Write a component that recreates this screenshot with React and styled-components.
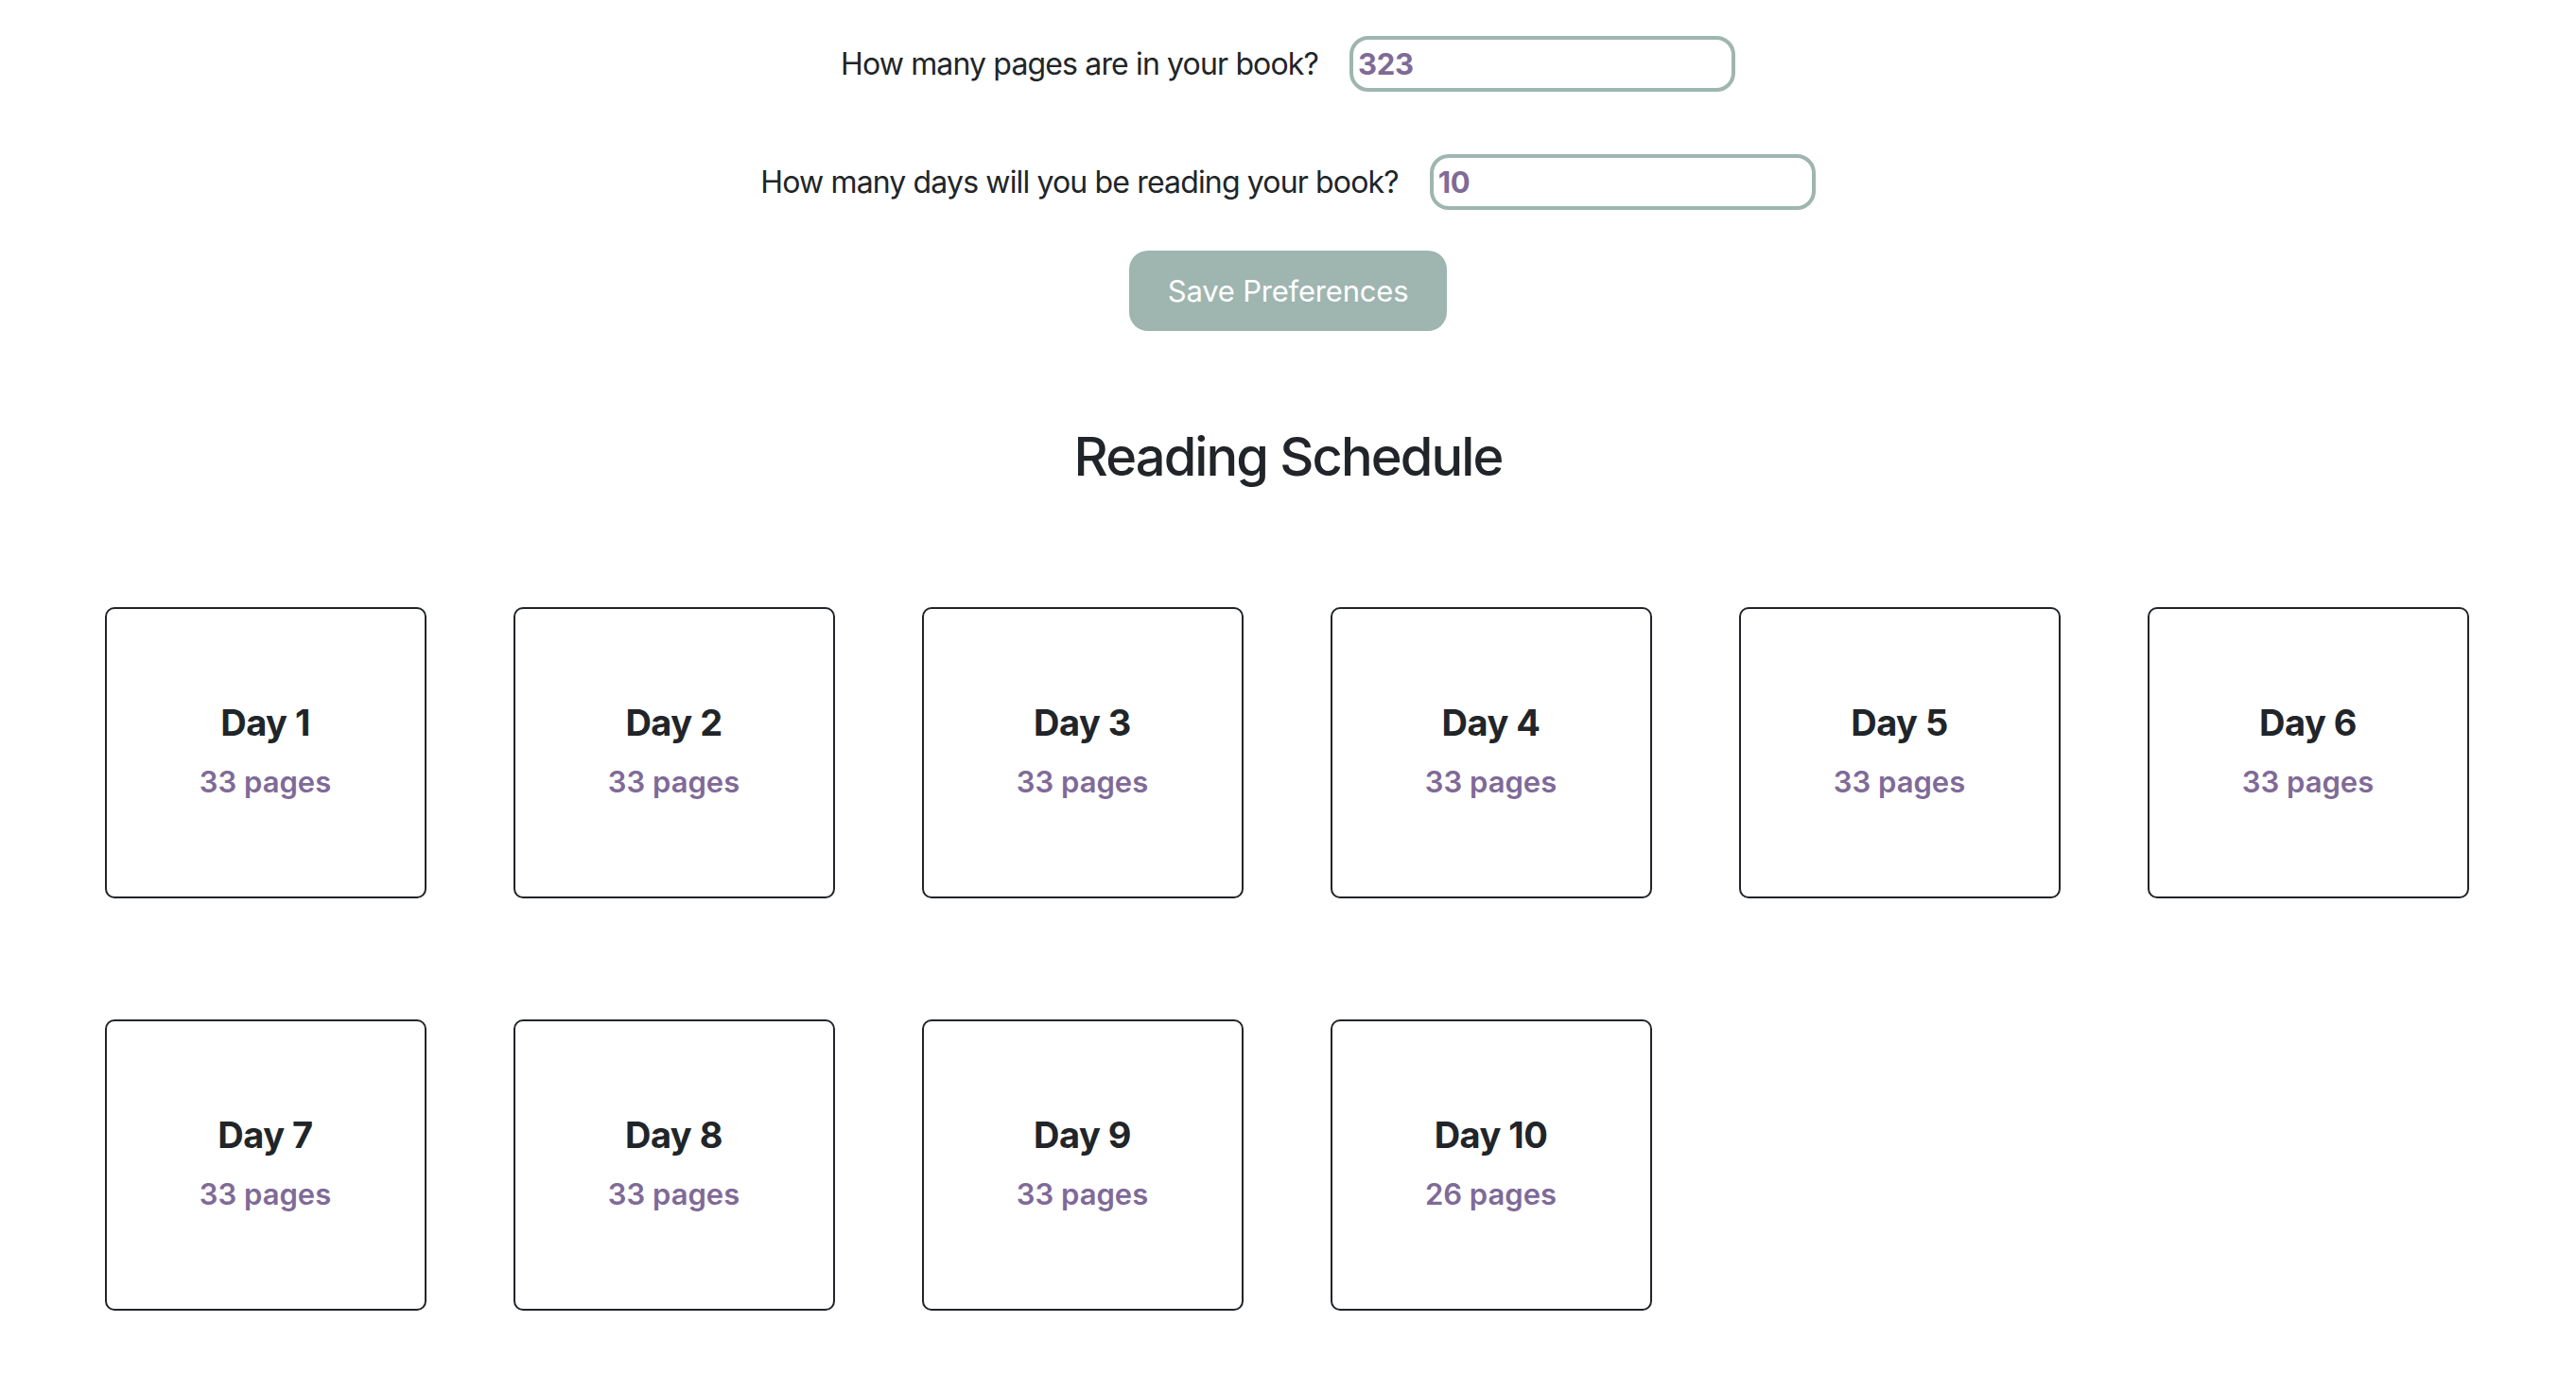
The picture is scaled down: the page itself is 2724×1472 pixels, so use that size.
import React from "react";
import styled, { createGlobalStyle } from "styled-components";

const GlobalStyle = createGlobalStyle`
  html, body {
    margin: 0;
    padding: 0;
    background: #ffffff;
  }
  body {
    font-family: Inter, "Noto Sans", "Liberation Sans", sans-serif;
    color: #212529;
  }
  * { box-sizing: border-box; }
`;

const Page = styled.main`
  width: 100%;
  padding-top: 38px;
  padding-bottom: 80px;
  display: flex;
  flex-direction: column;
  align-items: center;
`;

const Form = styled.form`
  display: flex;
  flex-direction: column;
  align-items: center;
  gap: 66px;
`;

const FieldRow = styled.div`
  display: flex;
  align-items: center;
  gap: 33px;
`;

const Label = styled.label`
  font-size: 32px;
  font-weight: 400;
  letter-spacing: -0.85px;
  color: #212529;
`;

const Input = styled.input`
  width: 408px;
  height: 59px;
  border: 4px solid #9fb5b0;
  border-radius: 20px;
  padding: 0 5px;
  font-family: Inter, "Noto Sans", "Liberation Sans", sans-serif;
  font-size: 31px;
  font-weight: 700;
  letter-spacing: -0.3px;
  color: #7f6a98;
  background: #ffffff;
  outline: none;
`;

const Button = styled.button`
  margin-top: -23px;
  width: 336px;
  height: 85px;
  border: none;
  border-radius: 20px;
  background: #9fb5b0;
  color: #ffffff;
  font-family: Inter, "Noto Sans", "Liberation Sans", sans-serif;
  font-size: 31px;
  font-weight: 400;
  letter-spacing: -0.2px;
  cursor: pointer;
`;

const Heading = styled.h2`
  margin: 100px 0 124px;
  font-size: 56px;
  font-weight: 500;
  line-height: 1.21;
  letter-spacing: -1.9px;
  color: #212529;
`;

const Grid = styled.section`
  display: grid;
  grid-template-columns: repeat(6, 340px);
  column-gap: 92px;
  row-gap: 128px;
  justify-content: center;
  width: 100%;
  padding-right: 3px;
`;

const Card = styled.div`
  height: 308px;
  border: 2px solid #212529;
  border-radius: 10px;
  display: flex;
  flex-direction: column;
  align-items: center;
  justify-content: center;
  gap: 20px;
  padding-bottom: 4px;
`;

const DayTitle = styled.h3`
  margin: 0;
  font-size: 38px;
  font-weight: 700;
  line-height: 1.21;
  letter-spacing: -0.5px;
  color: #212529;
`;

const PageCount = styled.p`
  margin: 0;
  font-size: 31px;
  font-weight: 600;
  line-height: 1.21;
  color: #7f6a98;
`;

const schedule = [33, 33, 33, 33, 33, 33, 33, 33, 33, 26];

export default function App() {
  return (
    <>
      <GlobalStyle />
      <Page>
        <Form onSubmit={(e) => e.preventDefault()}>
          <FieldRow>
            <Label htmlFor="pages">How many pages are in your book?</Label>
            <Input id="pages" type="text" defaultValue="323" />
          </FieldRow>
          <FieldRow>
            <Label htmlFor="days">How many days will you be reading your book?</Label>
            <Input id="days" type="text" defaultValue="10" />
          </FieldRow>
          <Button type="submit">Save Preferences</Button>
        </Form>
        <Heading>Reading Schedule</Heading>
        <Grid>
          {schedule.map((p, i) => (
            <Card key={i}>
              <DayTitle>Day {i + 1}</DayTitle>
              <PageCount>{p} pages</PageCount>
            </Card>
          ))}
        </Grid>
      </Page>
    </>
  );
}
